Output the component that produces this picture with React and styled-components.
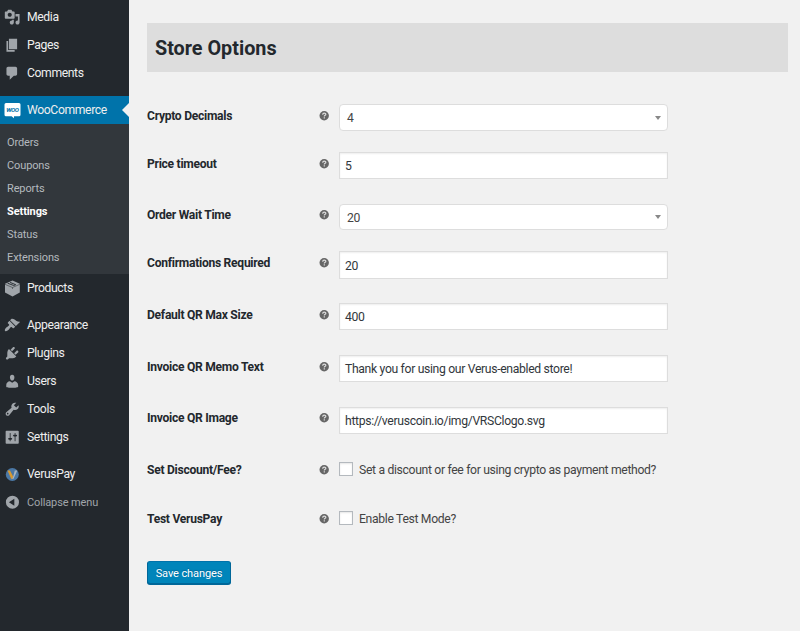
import React from "react";
import styled, { createGlobalStyle } from "styled-components";

const GlobalStyle = createGlobalStyle`
  * { box-sizing: border-box; }
  body {
    margin: 0;
    background: #f1f1f1;
    color: #444;
    font-family: Roboto, "Liberation Sans", sans-serif;
    font-size: 12.2px;
    letter-spacing: -0.33px;
  }
`;

const Page = styled.div`
  display: flex;
  height: 631px;
  overflow: hidden;
`;

const Sidebar = styled.nav`
  flex: none;
  width: 129px;
  padding-top: 3px;
  background: #23282d;
`;

const MenuItem = styled.a`
  display: flex;
  align-items: center;
  height: 28px;
  margin-top: ${(p) => p.$gap || 0}px;
  padding-left: 4px;
  color: ${(p) => (p.$muted ? "#a0a5aa" : "#eee")};
  background: ${(p) => (p.$active ? "#0073aa" : "transparent")};
  font-size: ${(p) => (p.$muted ? 11 : 12.2)}px;
  letter-spacing: ${(p) => (p.$muted ? -0.13 : -0.39)}px;
  line-height: 28px;
  white-space: nowrap;
`;

const MenuText = styled.span`
  padding-top: ${(p) => (p.$muted ? 1 : 0)}px;
`;

const IconSlot = styled.span`
  flex: none;
  display: flex;
  align-items: center;
  width: 23px;
  color: #a0a5aa;
`;

const ActiveArrow = styled.span`
  margin-left: auto;
  border: 7px solid transparent;
  border-left: 0;
  border-right-color: #f1f1f1;
`;

const SubMenu = styled.div`
  height: 150px;
  padding: 7px 0 0 7px;
  background: #32373c;
`;

const SubItem = styled.a`
  display: block;
  height: 23px;
  color: ${(p) => (p.$current ? "#fff" : "#b4b9be")};
  font-size: 11px;
  font-weight: ${(p) => (p.$current ? 700 : 400)};
  letter-spacing: ${(p) => (p.$current ? -0.1 : -0.12)}px;
  line-height: 23px;
`;

const Content = styled.main`
  flex: 1;
  padding: 23px 12px 0 18px;
`;

const Title = styled.h1`
  height: 49px;
  margin: 0 0 32px;
  padding-left: 8px;
  background: #ddd;
  color: #23282d;
  font-size: 19.8px;
  font-weight: 700;
  letter-spacing: 0;
  line-height: 51px;
`;

const Row = styled.div`
  display: grid;
  grid-template-columns: 172px 20px 329px;
  align-items: start;
  height: ${(p) => p.$height}px;
`;

const Label = styled.label`
  color: #23282d;
  font-size: 12.1px;
  font-weight: 700;
  letter-spacing: -0.28px;
  line-height: 24px;
`;

const Help = styled.span`
  display: flex;
  align-items: center;
  height: 23px;
`;

const Field = styled.div`
  display: flex;
  align-items: center;
  justify-content: space-between;
  height: ${(p) => p.$h || 27}px;
  margin-top: ${(p) => p.$top || 0}px;
  padding: 1px 6px 0 ${(p) => (p.$select ? 7 : 5)}px;
  border: 1px solid #ddd;
  border-radius: ${(p) => (p.$select ? 4 : 0)}px;
  background: #fff;
  box-shadow: ${(p) => (p.$select ? "none" : "inset 0 1px 2px rgba(0, 0, 0, 0.07)")};
  color: ${(p) => (p.$select ? "#444" : "#32373c")};
  white-space: nowrap;
`;

const Caret = styled.span`
  margin-bottom: 1px;
  border: solid transparent;
  border-width: 4px 3.5px 0;
  border-top-color: #888;
`;

const CheckLine = styled.label`
  display: flex;
  align-items: center;
  gap: 6px;
  height: 24px;
  white-space: nowrap;
`;

const CheckBox = styled.span`
  flex: none;
  width: 14px;
  height: 14px;
  margin-top: -2px;
  border: 1px solid #b4b9be;
  background: #fff;
  box-shadow: inset 0 1px 2px rgba(0, 0, 0, 0.1);
`;

const SaveButton = styled.button`
  display: block;
  width: 84px;
  height: 23px;
  margin-top: 5px;
  padding: 2px 0 0;
  border: 1px solid #006799;
  border-color: #0073aa #006799 #006799;
  border-radius: 3px;
  background: #0085ba;
  box-shadow: 0 1px 0 #006799;
  color: #fff;
  font: 11px/19px Roboto, sans-serif;
  letter-spacing: -0.1px;
  text-shadow: 0 -1px 1px #006799;
`;

const PATHS = {
  media:
    "M13 11V4c0-.55-.45-1-1-1h-1.670L9 1H5L3.670 3H2c-.55 0-1 .45-1 1v7c0 .55.45 1 1 1h10c.55 0 1-.45 1-1zM7 4.500c1.380 0 2.500 1.120 2.500 2.500S8.380 9.500 7 9.500 4.500 8.380 4.500 7 5.620 4.500 7 4.500zM14 6h5v10.500c0 1.380-1.120 2.500-2.500 2.500S14 17.880 14 16.500s1.120-2.500 2.500-2.500c.17 0 .34.02.5.05V9h-3V6zM10 14.050V13h2v3.500c0 1.380-1.120 2.500-2.500 2.500S7 17.880 7 16.500 8.120 14 9.500 14c.17 0 .34.02.5.05z",
  pages: "M6 15V2h10v13H6zm-1 1h8v2H3V5h2v11z",
  comments:
    "M5 2h9c1.100 0 2 .9 2 2v7c0 1.100-.9 2-2 2h-2l-5 5v-5H5c-1.100 0-2-.9-2-2V4c0-1.100.9-2 2-2z",
  appearance:
    "M14.480 11.060L7.410 3.990l1.500-1.500c.5-.56 2.300-.47 3.510.32 1.210.8 1.430 1.280 2.910 2.100 1.180.64 2.450 1.260 4.450.85zm-.71.71L6.700 4.700 4.930 6.470c-.39.39-.39 1.020 0 1.410l1.060 1.060c.39.39.39 1.030 0 1.420-.6.6-1.430 1.110-2.210 1.690-.35.26-.7.53-1.010.84C1.430 14.230.4 16.080 1.400 17.070c.99 1 2.840-.03 4.180-1.360.31-.31.58-.66.85-1.020.57-.78 1.080-1.610 1.690-2.210.39-.39 1.020-.39 1.410 0l1.060 1.060c.39.39 1.020.39 1.410 0z",
  plugins:
    "M13.110 4.360L9.870 7.600 8 5.730l3.240-3.240c.35-.34 1.050-.2 1.560.32.52.51.66 1.210.31 1.550zm-8 1.770l.91-1.120 9.010 9.010-1.190.84c-.71.71-2.630 1.160-3.820 1.160H6.140L4.900 17.260c-.59.59-1.540.59-2.120 0-.59-.58-.59-1.530 0-2.120l1.240-1.240v-3.880c0-1.130.4-3.190 1.090-3.890zm7.260 3.970l3.240-3.240c.34-.35 1.040-.21 1.550.31.52.51.66 1.210.31 1.550l-3.240 3.250z",
  users:
    "M10 9.250c-2.270 0-2.730-3.440-2.730-3.440C7 4.020 7.820 2 9.970 2c2.160 0 2.980 2.020 2.710 3.810 0 0-.41 3.440-2.680 3.440zm0 2.570L12.720 10c2.390 0 4.520 2.330 4.520 4.530v2.490s-3.650 1.130-7.240 1.130c-3.650 0-7.240-1.130-7.240-1.130v-2.490c0-2.250 1.940-4.480 4.470-4.480z",
  tools:
    "M16.680 9.770c-1.340 1.340-3.300 1.670-4.950.99l-5.410 6.520c-.99.99-2.590.99-3.580 0s-.99-2.590 0-3.570l6.520-5.420c-.68-1.650-.35-3.610.99-4.950 1.280-1.280 3.120-1.620 4.720-1.060l-2.890 2.890 2.820 2.820 2.860-2.870c.53 1.580.18 3.390-1.080 4.650zM3.810 16.210c.4.39 1.040.39 1.430 0 .4-.4.4-1.040 0-1.430-.39-.4-1.030-.4-1.430 0-.39.39-.39 1.030 0 1.430z",
  settings:
    "M18 17V3c0-.6-.4-1-1-1H3c-.6 0-1 .4-1 1v14c0 .6.4 1 1 1h14c.6 0 1-.4 1-1zM8 11h1c.55 0 1 .45 1 1s-.45 1-1 1H8v1.500c0 .28-.22.5-.5.5s-.5-.22-.5-.5V13H6c-.55 0-1-.45-1-1s.45-1 1-1h1V5.500c0-.28.22-.5.5-.5s.5.22.5.5V11zm5-2h-1c-.55 0-1-.45-1-1s.45-1 1-1h1V5.500c0-.28.22-.5.5-.5s.5.22.5.5V7h1c.55 0 1 .45 1 1s-.45 1-1 1h-1v5.500c0 .28-.22.5-.5.5s-.5-.22-.5-.5V9z",
  collapse:
    "M10.300 2a8 8 0 1 0 0 16 8 8 0 0 0 0-16zM12.600 5.800v8.400L6 10z",
};

function MenuIcon({ name }) {
  if (name === "woo") {
    return (
      <svg width="17" height="17" viewBox="0 0 17 17">
        <path fill="#fff" d="M2 1h13a1.500 1.500 0 0 1 1.500 1.500v10.300a1.500 1.500 0 0 1-1.500 1.500h-5v1.900L7.600 14.300H2A1.500 1.500 0 0 1 .5 12.800V2.500A1.500 1.500 0 0 1 2 1z" />
        <text x="8.400" y="9.900" textAnchor="middle" textLength="12.400" lengthAdjust="spacingAndGlyphs" fill="#0073aa" fontFamily="Roboto" fontStyle="italic" fontWeight="700" fontSize="6">WOO</text>
      </svg>
    );
  }
  if (name === "products") {
    return (
      <svg width="17" height="17" viewBox="0 0 17 17">
        <path fill="#a0a5aa" d="M8.500.5L15.800 3.800v8.700l-7.300 4-7.500-4V3.800z" />
        <path fill="none" stroke="#23282d" strokeWidth=".5" d="M1 4.300l7.500 3.200 7.300-3.200M8.500 7.500v1.500" />
        <path fill="none" stroke="#23282d" strokeWidth=".9" d="M3.600 3.200l6.100 2.300 2-.8-5.600-2.300" />
      </svg>
    );
  }
  if (name === "verus") {
    return (
      <svg width="17" height="17" viewBox="0 0 17 17">
        <circle cx="8.300" cy="8.500" r="6.500" fill="#4b78a5" />
        <path fill="#d8992f" d="M3.500 4.500H6l3.200 6.200-1 2.300H7.300z" />
        <path fill="#aab4bd" d="M10.800 4.500h2.500L9.400 13H8.200l1-2.500z" />
      </svg>
    );
  }
  return (
    <svg width="16.400" height="16.400" viewBox="0 0 20 20">
      <path fill="currentColor" fillRule="evenodd" d={PATHS[name]} />
    </svg>
  );
}

function HelpIcon() {
  return (
    <svg width="10" height="10" viewBox="0 0 10 10">
      <circle cx="5.200" cy="4.700" r="4.700" fill="#666" />
      <path fill="none" stroke="#ddd" strokeWidth="1.200" d="M3.700 3.700c0-2 3.100-2 3.100-.3C6.800 4.400 5.300 4.300 5.300 5.500M5.300 6.300v1.100" />
    </svg>
  );
}

const submenu = ["Orders", "Coupons", "Reports", "Settings", "Status", "Extensions"];

const lowerMenu = [
  { icon: "products", text: "Products" },
  { icon: "appearance", text: "Appearance", gap: 9 },
  { icon: "plugins", text: "Plugins" },
  { icon: "users", text: "Users" },
  { icon: "tools", text: "Tools" },
  { icon: "settings", text: "Settings" },
  { icon: "verus", text: "VerusPay", gap: 9 },
  { icon: "collapse", text: "Collapse menu", muted: true },
];

const rows = [
  { label: "Crypto Decimals", value: "4", type: "select", height: 48 },
  { label: "Price timeout", value: "5", height: 51 },
  { label: "Order Wait Time", value: "20", type: "select", height: 48, top: 1, h: 26 },
  { label: "Confirmations Required", value: "20", height: 52, h: 28 },
  { label: "Default QR Max Size", value: "400", height: 52 },
  { label: "Invoice QR Memo Text", value: "Thank you for using our Verus-enabled store!", height: 51 },
  { label: "Invoice QR Image", value: "https://veruscoin.io/img/VRSClogo.svg", height: 52, top: 1 },
  { label: "Set Discount/Fee?", value: "Set a discount or fee for using crypto as payment method?", type: "check", height: 49 },
  { label: "Test VerusPay", value: "Enable Test Mode?", type: "check", height: 49 },
];

function Entry({ icon, text, gap, muted, active }) {
  return (
    <MenuItem $gap={gap} $muted={muted} $active={active}>
      <IconSlot><MenuIcon name={icon} /></IconSlot>
      <MenuText $muted={muted}>{text}</MenuText>
      {active && <ActiveArrow />}
    </MenuItem>
  );
}

export default function App() {
  return (
    <Page>
      <GlobalStyle />
      <Sidebar>
        <Entry icon="media" text="Media" />
        <Entry icon="pages" text="Pages" />
        <Entry icon="comments" text="Comments" />
        <Entry icon="woo" text="WooCommerce" gap={9} active />
        <SubMenu>
          {submenu.map((s) => (
            <SubItem key={s} $current={s === "Settings"}>{s}</SubItem>
          ))}
        </SubMenu>
        {lowerMenu.map((m) => <Entry key={m.text} {...m} />)}
      </Sidebar>
      <Content>
        <Title>Store Options</Title>
        {rows.map((r) => (
          <Row key={r.label} $height={r.height}>
            <Label>{r.label}</Label>
            <Help><HelpIcon /></Help>
            {r.type === "check" ? (
              <CheckLine><CheckBox />{r.value}</CheckLine>
            ) : (
              <Field $select={r.type === "select"} $top={r.top} $h={r.h}>
                {r.value}
                {r.type === "select" && <Caret />}
              </Field>
            )}
          </Row>
        ))}
        <SaveButton>Save changes</SaveButton>
      </Content>
    </Page>
  );
}
